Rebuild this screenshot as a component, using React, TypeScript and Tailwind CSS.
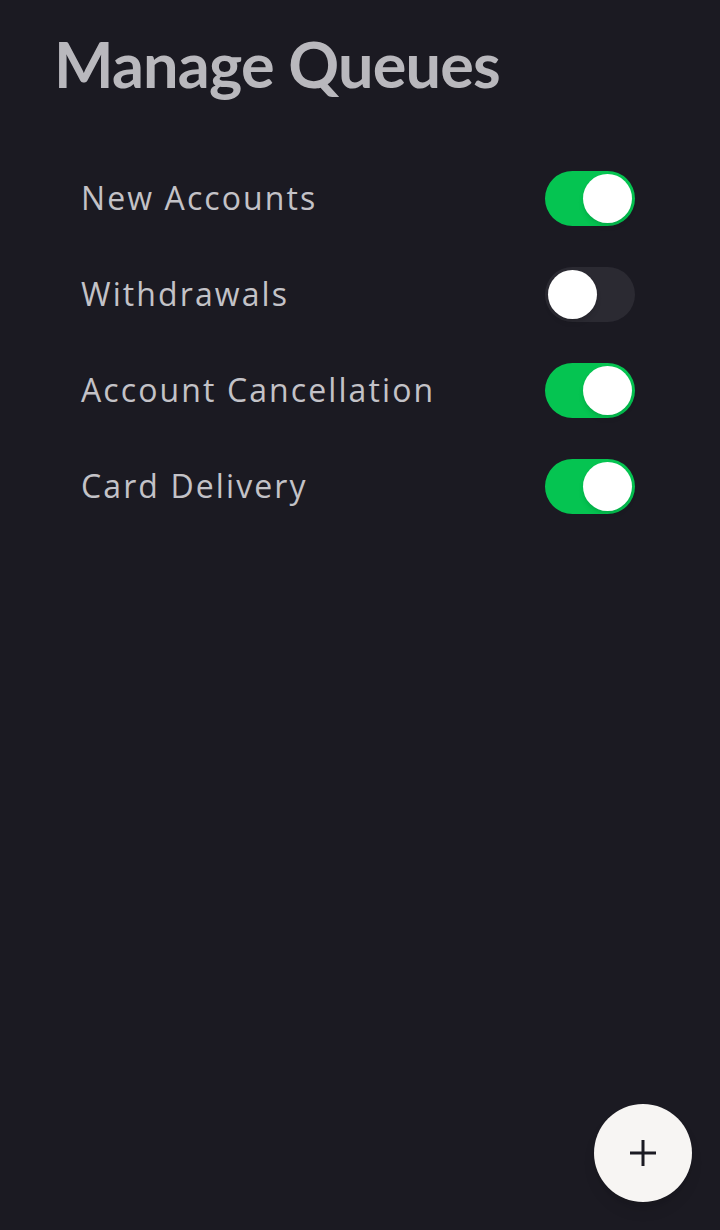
const queues = [
  { name: "New Accounts", on: true },
  { name: "Withdrawals", on: false },
  { name: "Account Cancellation", on: true },
  { name: "Card Delivery", on: true },
];

const Toggle = ({ on }: { on: boolean }) => (
  <div
    className={
      "flex items-center w-[90px] h-[55px] rounded-full px-[3px] " +
      (on ? "bg-[#05c451] justify-end" : "bg-[#2b2a32] justify-start")
    }
  >
    <div className="w-[49px] h-[49px] rounded-full bg-white shadow-md" />
  </div>
);

export default function App() {
  return (
    <div className="relative w-[720px] h-[1230px] bg-[#1b1a22] overflow-hidden">
      <h1 className="pl-[54px] pt-[28px] font-['Lato',sans-serif] font-bold text-[63px] leading-[72px] text-[#b9b8bd] tracking-[-0.8px]">
        Manage Queues
      </h1>
      <div className="mt-[50px] pl-[81px] pr-[85px] flex flex-col">
        {queues.map((q) => (
          <div key={q.name} className="flex items-center justify-between h-[96px]">
            <span className="font-['Open_Sans',sans-serif] text-[32px] tracking-[2.1px] text-[#c3c2c7]">
              {q.name}
            </span>
            <Toggle on={q.on} />
          </div>
        ))}
      </div>
      <button className="absolute left-[594px] top-[1104px] w-[98px] h-[98px] rounded-full bg-[#f7f5f3] shadow-lg flex items-center justify-center">
        <svg width="28" height="28" viewBox="0 0 28 28" fill="none" stroke="#1b1a22" strokeWidth="3">
          <path d="M14 1v26M1 14h26" />
        </svg>
      </button>
    </div>
  );
}
